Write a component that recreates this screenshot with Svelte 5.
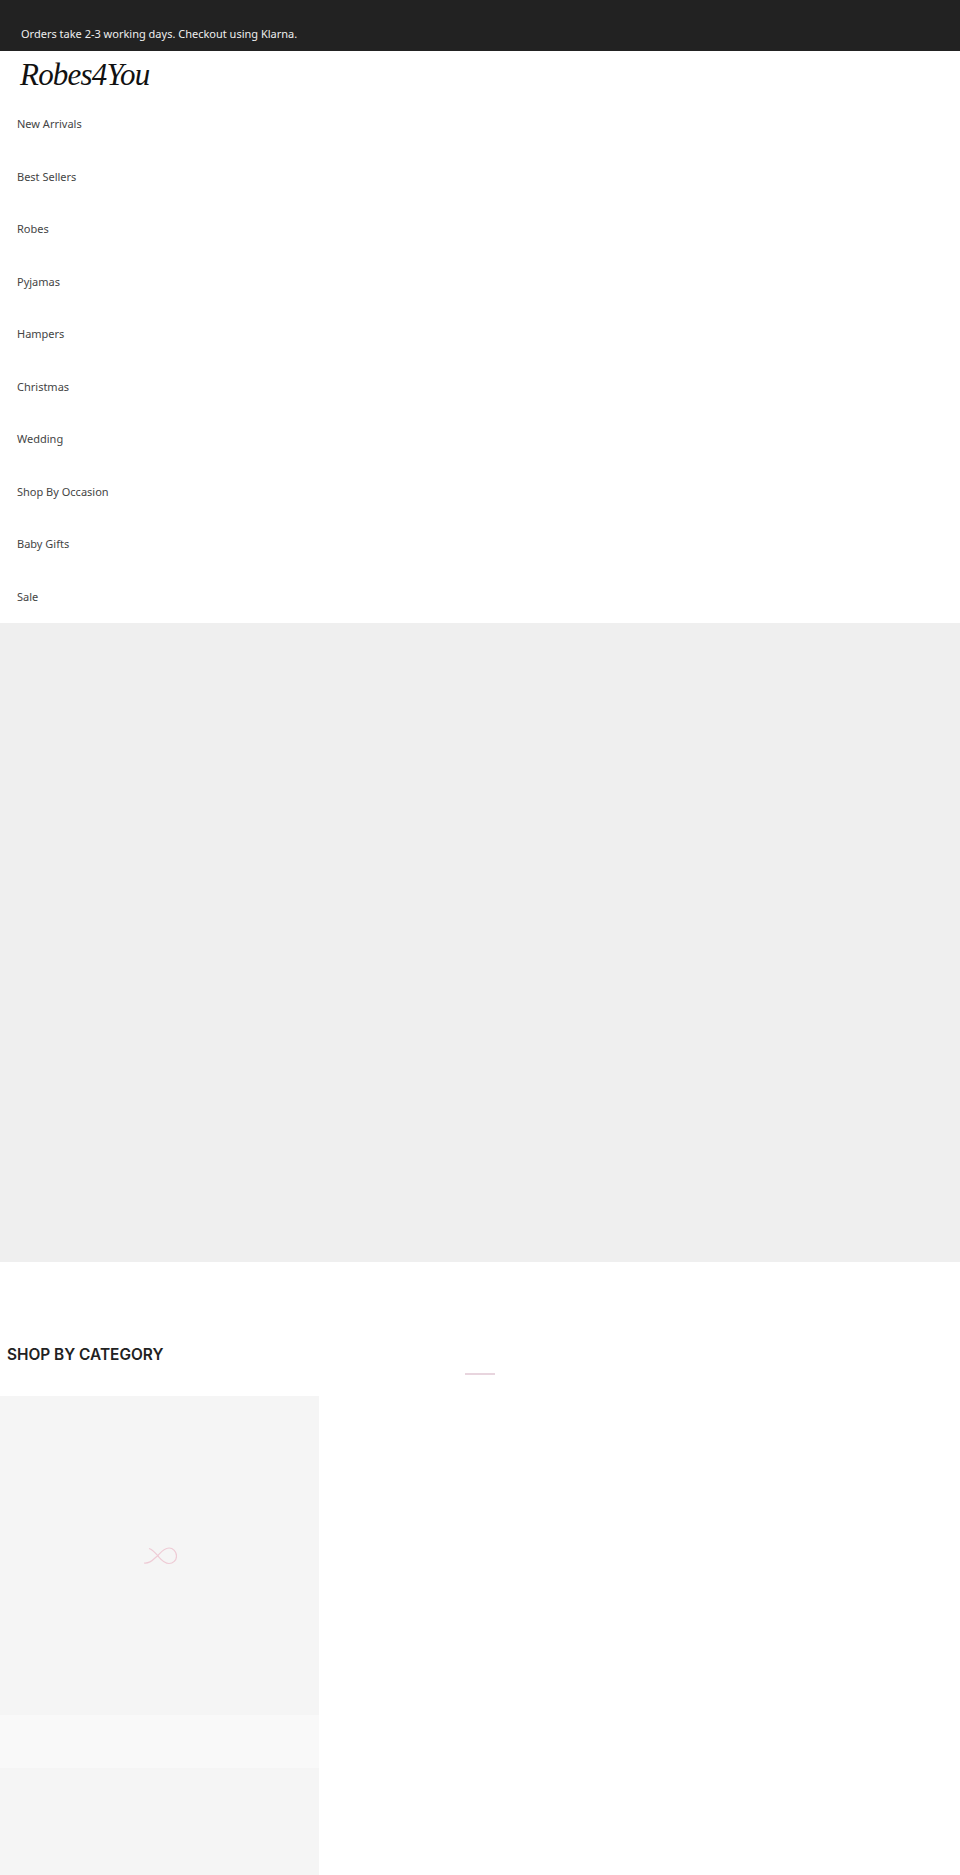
<script>
  const navItems = [
    'New Arrivals',
    'Best Sellers',
    'Robes',
    'Pyjamas',
    'Hampers',
    'Christmas',
    'Wedding',
    'Shop By Occasion',
    'Baby Gifts',
    'Sale'
  ];
</script>

<div class="page">
  <div class="announcement">
    <p>Orders take 2-3 working days. Checkout using Klarna.</p>
  </div>

  <header class="header">
    <a class="logo" href="#home">Robes4You</a>
    <nav class="nav">
      {#each navItems as item}
        <a class="nav-link" href="#nav">{item}</a>
      {/each}
    </nav>
  </header>

  <div class="hero"></div>

  <section class="categories">
    <h2 class="title">SHOP BY CATEGORY</h2>
    <div class="rule"></div>
    <div class="card">
      <div class="card-image">
        <svg class="loader" viewBox="0 0 34 18" fill="none" stroke="#eecbd5" stroke-width="1.2">
          <path d="M1 16C5 16.5 9 14 12 11L15 8.5C18 5 21 1 26 1C30 1 33.5 4.5 33.5 9C33.5 13.5 30 16.5 26 16.5C21 16.5 18 12.5 15 9C12 5.5 9.5 2.5 6 1.5" />
        </svg>
      </div>
      <div class="card-caption"></div>
      <div class="card-image next"></div>
    </div>
  </section>
</div>

<style>
  :global(body) {
    margin: 0;
    background: #fff;
  }

  .page {
    height: 1875px;
    overflow: hidden;
    font-family: "Noto Sans", sans-serif;
    color: #444;
  }

  .announcement {
    height: 51px;
    box-sizing: border-box;
    padding: 26px 21px 0;
    background: #222;
    color: #eee;
    font-size: 11px;
    line-height: 15px;
  }

  .announcement p {
    margin: 0;
  }

  .header {
    height: 572px;
  }

  .logo {
    display: block;
    height: 48px;
    padding-left: 20px;
    font-family: "Liberation Serif", serif;
    font-style: italic;
    font-size: 31px;
    line-height: 48px;
    letter-spacing: -0.8px;
    color: #111;
    text-decoration: none;
  }

  .nav {
    display: flex;
    flex-direction: column;
  }

  .nav-link {
    height: 52.5px;
    box-sizing: border-box;
    padding: 17px 17px 0;
    font-size: 11px;
    line-height: 16px;
    color: #444;
    text-decoration: none;
  }

  .hero {
    height: 639px;
    background: #efefef;
  }

  .categories {
    padding-top: 81px;
  }

  .title {
    margin: 0;
    padding-left: 7px;
    font-family: Inter, sans-serif;
    font-size: 15.4px;
    line-height: 24px;
    font-weight: 600;
    color: #222;
  }

  .rule {
    width: 30px;
    height: 2px;
    margin: 6px 0 21px 465px;
    background: #e8d5de;
  }

  .card {
    width: 319px;
  }

  .card-image {
    height: 319px;
    display: flex;
    align-items: center;
    justify-content: center;
    background: #f5f5f5;
  }

  .card-image.next {
    height: 107px;
  }

  .card-caption {
    height: 53px;
    background: #f9f9f9;
  }

  .loader {
    width: 34px;
    height: 18px;
  }
</style>
